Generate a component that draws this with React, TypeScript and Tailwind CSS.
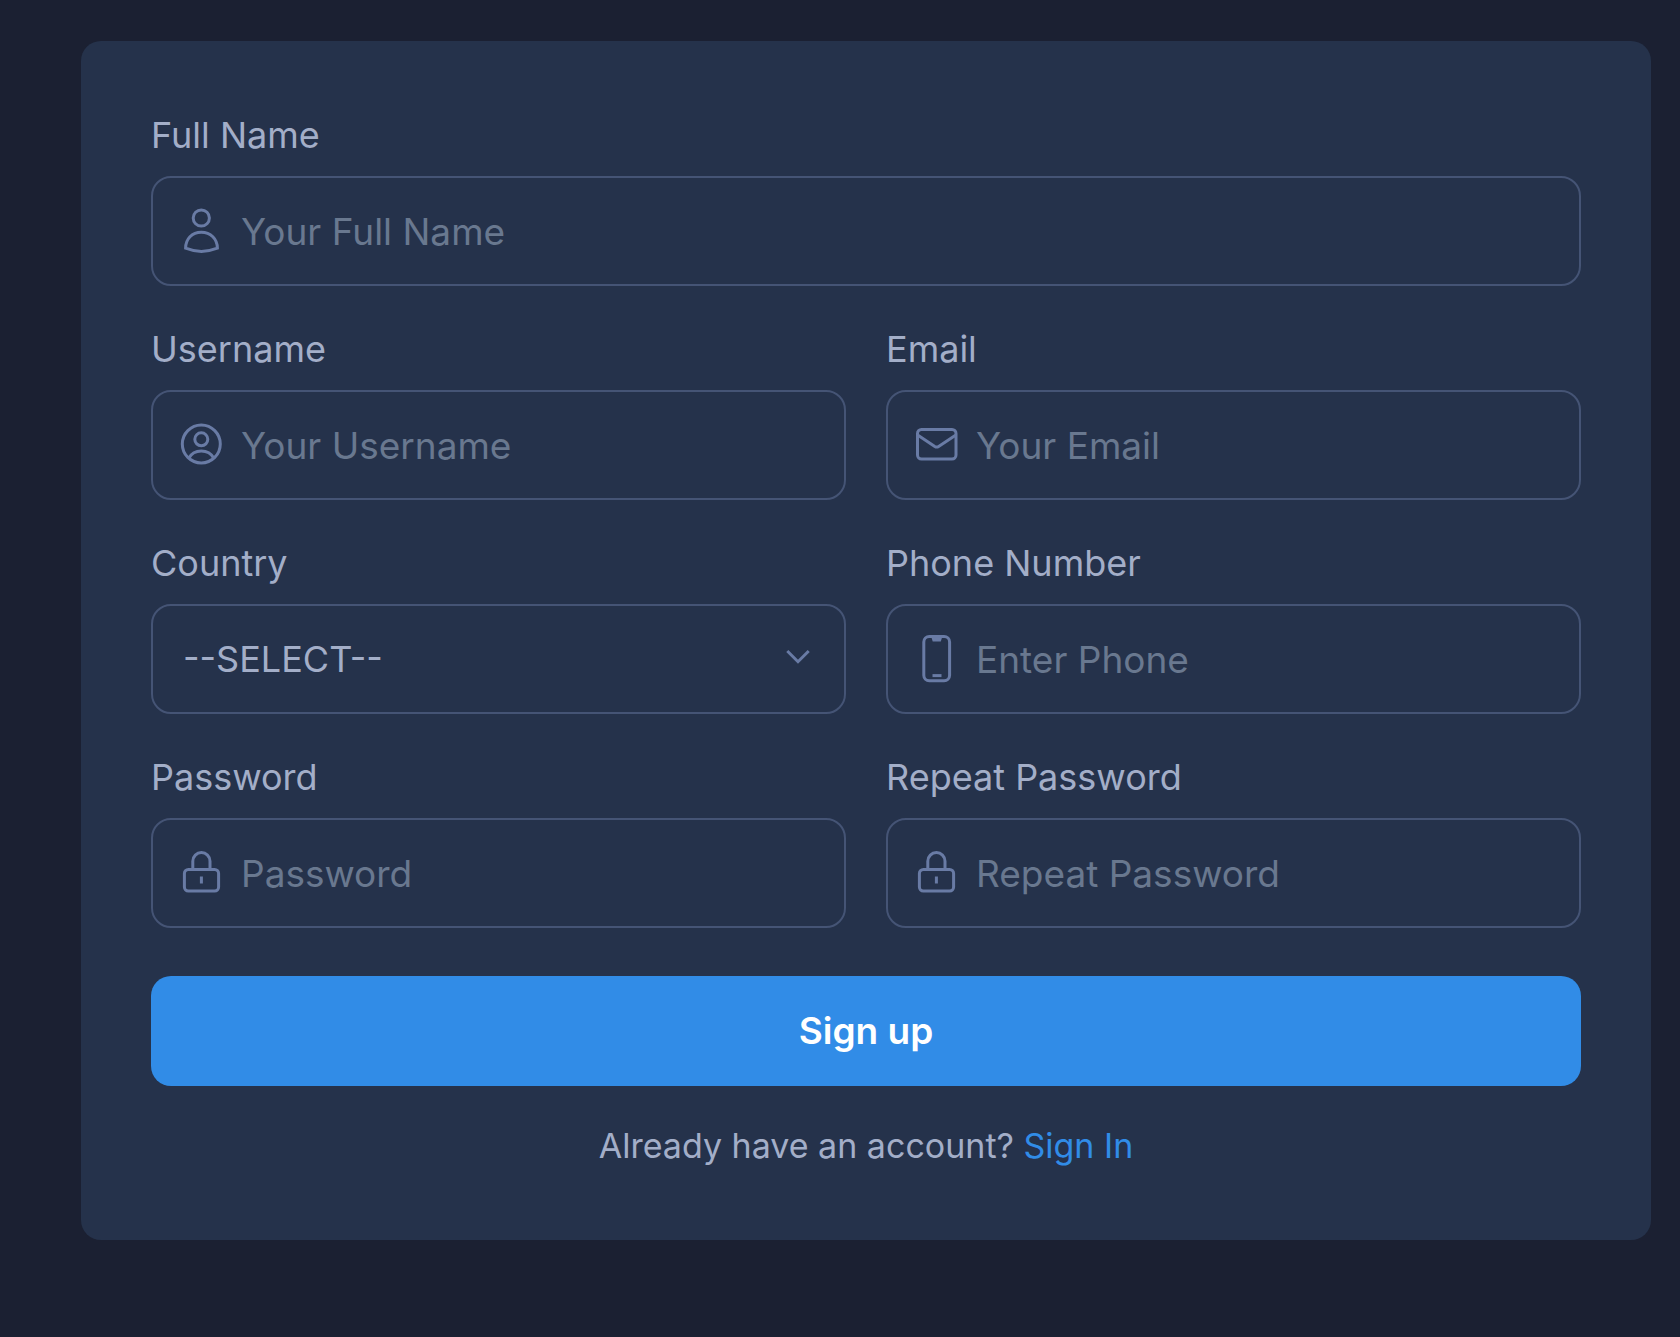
import React from 'react';

const iconProps = {
  viewBox: '0 0 48 48',
  fill: 'none',
  stroke: 'currentColor',
  'aria-hidden': true,
  className: 'h-12 w-12 shrink-0 text-[#697ba5]',
} as const;

const UserIcon = () => (
  <svg {...iconProps} strokeWidth={3}>
    <circle cx="24.3" cy="11" r="8.1" />
    <path d="M8.6 41.2C8.6 32 15 25.2 24.3 25.2S40.4 32 40.4 41.2Q24.3 47.6 8.6 41.2Z" />
  </svg>
);

const UserCircleIcon = () => (
  <svg {...iconProps} strokeWidth={3}>
    <circle cx="24.3" cy="23" r="19" />
    <circle cx="24.3" cy="18.3" r="6.5" />
    <path d="M11.8 37.2C14.5 32.3 19 30 24.3 30S34.1 32.3 36.8 37.2" />
  </svg>
);

const MailIcon = () => (
  <svg {...iconProps} strokeWidth={3}>
    <rect x="5.5" y="8.5" width="38.5" height="29.5" rx="4" />
    <path d="M6 14.2L22.8 25.4Q24.7 26.6 26.6 25.4L43.5 14.2" />
  </svg>
);

const PhoneIcon = () => (
  <svg {...iconProps} strokeWidth={3}>
    <rect x="11.8" y="1.5" width="25.8" height="44.2" rx="5.5" />
    <path d="M19.5 2.5H30L28.8 6.6H20.7Z" fill="currentColor" stroke="none" />
    <path d="M20.5 40.6H29.5" strokeWidth={3} />
  </svg>
);

const LockIcon = () => (
  <svg {...iconProps} strokeWidth={3}>
    <rect x="7.4" y="20.4" width="34.2" height="21.6" rx="4" />
    <path d="M15.8 20.4V12.2A8.6 8.6 0 0 1 33 12.2V20.4" />
    <path d="M24.4 27.5V34.5" />
  </svg>
);

interface FieldProps {
  id: string;
  label: string;
  placeholder: string;
  icon: React.ReactNode;
  type?: string;
}

const labelClass = 'mb-[17px] block text-[36px] leading-[48px] text-[#a3aec8]';

const Field: React.FC<FieldProps> = ({ id, label, placeholder, icon, type = 'text' }) => (
  <div className="min-w-0">
    <label htmlFor={id} className={labelClass}>
      {label}
    </label>
    <div className="flex h-[110px] items-center gap-4 rounded-[20px] border-2 border-[#455475] px-6 focus-within:border-[#318ce7]">
      {icon}
      <input
        id={id}
        name={id}
        type={type}
        placeholder={placeholder}
        className="h-full w-full min-w-0 bg-transparent text-[37px] text-[#a3aec8] outline-none placeholder:text-[#69788f]"
      />
    </div>
  </div>
);

const CountryField = () => (
  <div className="min-w-0">
    <label htmlFor="country" className={labelClass}>
      Country
    </label>
    <div className="relative">
      <select
        id="country"
        name="country"
        className="block h-[110px] w-full appearance-none rounded-[20px] border-2 border-[#455475] bg-[#25324b] pl-[30px] pr-20 text-[36px] text-[#a3aec8] outline-none focus:border-[#318ce7]"
      >
        <option value="">--SELECT--</option>
      </select>
      <svg
        viewBox="0 0 24 24"
        fill="none"
        stroke="currentColor"
        strokeWidth={3}
        aria-hidden
        className="pointer-events-none absolute inset-y-0 right-9 my-auto h-6 w-6 text-[#697ba5]"
      >
        <path d="M1.3 4L12 14.7L22.7 4" />
      </svg>
    </div>
  </div>
);

export default function App() {
  return (
    <main className="min-h-screen bg-[#1b2032] pt-[41px] pr-[29px] pb-24 pl-[81px] font-['Inter',sans-serif]">
      <form className="rounded-[20px] bg-[#25324b] p-[70px]" onSubmit={(e) => e.preventDefault()}>
        <div className="grid grid-cols-2 gap-x-10 gap-y-[39px]">
          <div className="col-span-2">
            <Field id="fullName" label="Full Name" placeholder="Your Full Name" icon={<UserIcon />} />
          </div>
          <Field id="username" label="Username" placeholder="Your Username" icon={<UserCircleIcon />} />
          <Field id="email" label="Email" placeholder="Your Email" type="email" icon={<MailIcon />} />
          <CountryField />
          <Field id="phone" label="Phone Number" placeholder="Enter Phone" type="tel" icon={<PhoneIcon />} />
          <Field id="password" label="Password" placeholder="Password" type="password" icon={<LockIcon />} />
          <Field
            id="repeatPassword"
            label="Repeat Password"
            placeholder="Repeat Password"
            type="password"
            icon={<LockIcon />}
          />
        </div>

        <button
          type="submit"
          className="mt-12 h-[110px] w-full rounded-[20px] bg-[#318ce7] text-[37px] font-semibold text-white"
        >
          Sign up
        </button>

        <p className="mt-9 text-center text-[34px] leading-[48px] text-[#a3aec8]">
          Already have an account?{' '}
          <a href="#signin" className="text-[#318ce7]">
            Sign In
          </a>
        </p>
      </form>
    </main>
  );
}
